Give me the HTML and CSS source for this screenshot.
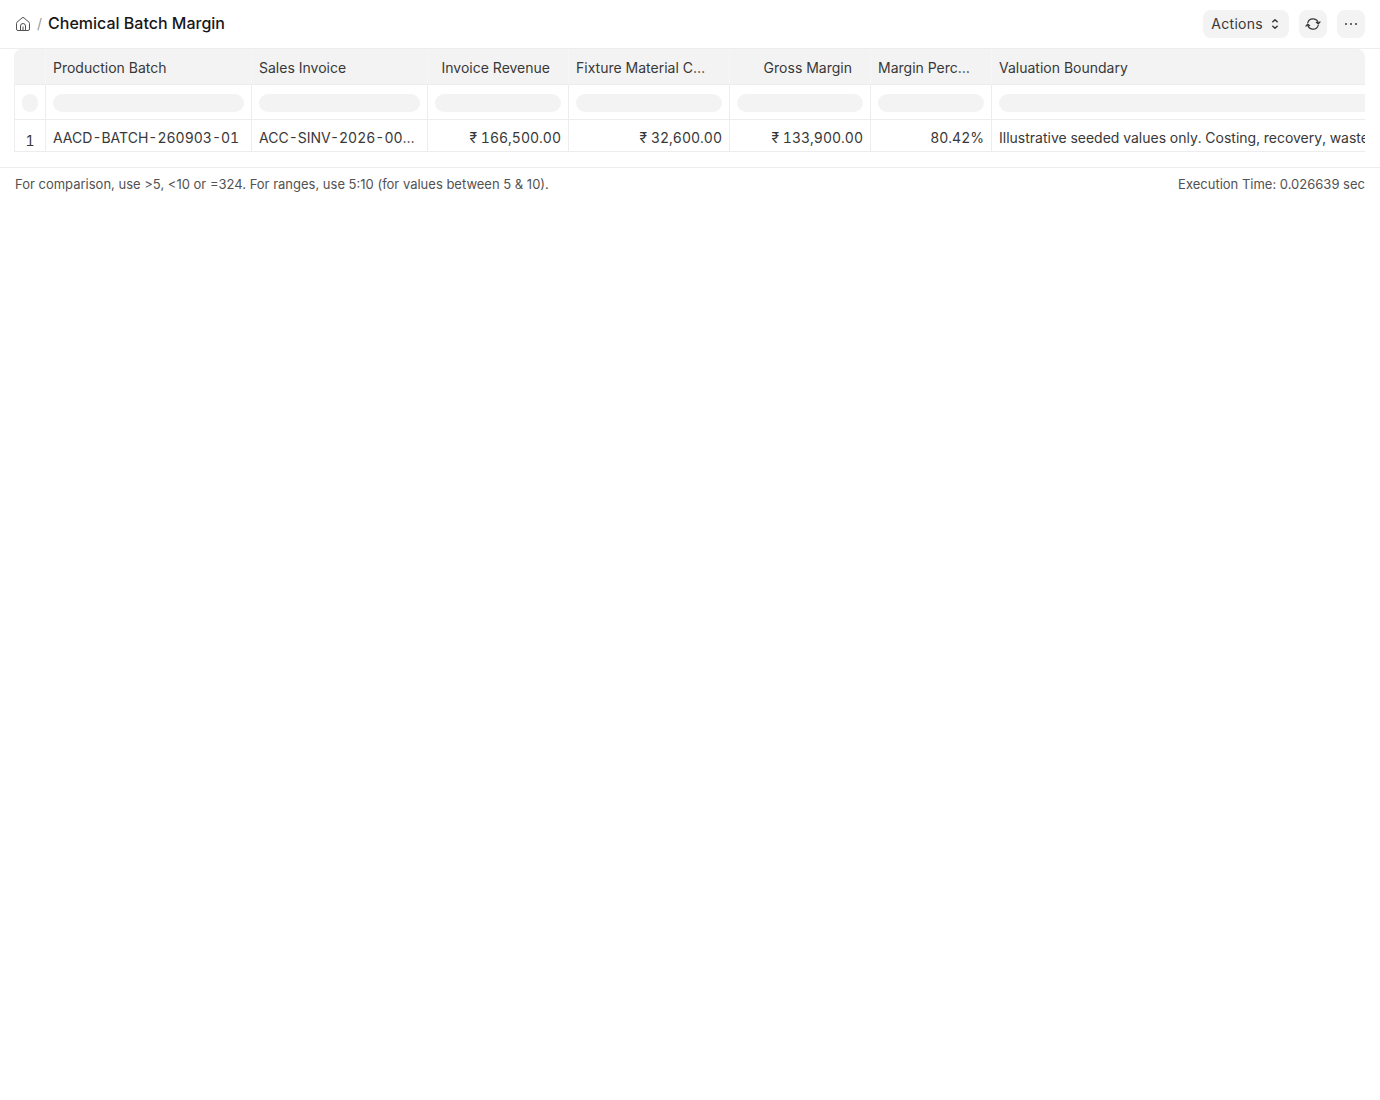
FILE: index.html
```
<!DOCTYPE html>
<html lang="en">
<head>
    <meta charset="UTF-8">
    <meta name="viewport" content="width=device-width, initial-scale=1.0">
    <title>Chemical Batch Margin</title>
    <link rel="stylesheet" href="styles.css">
</head>
<body>
    <header class="page-head">
        <nav class="breadcrumb" aria-label="Breadcrumb">
            <a href="#" class="home-link" aria-label="Home">
                <svg width="16" height="16" viewBox="0 0 16 16" fill="none" stroke="currentColor" stroke-linejoin="round">
                    <path d="M1.5 7.3a1.5 1.5 0 0 1 .5-1.1l5-4.3a1.5 1.5 0 0 1 2 0l5 4.3a1.5 1.5 0 0 1 .5 1.1V13a1.5 1.5 0 0 1-1.5 1.5H3A1.5 1.5 0 0 1 1.5 13z"/>
                    <path d="M5.5 14.5V10a2.5 2.5 0 0 1 5 0v4.5M8 10.5v4"/>
                </svg>
            </a>
            <span class="divider">/</span>
            <h1>Chemical Batch Margin</h1>
        </nav>
        <div class="page-actions">
            <button type="button" class="btn">
                Actions
                <svg width="8" height="12" viewBox="0 0 8 12" fill="none" stroke="currentColor" stroke-width="1.5" stroke-linecap="round" stroke-linejoin="round">
                    <path d="M1.8 3.8 4 1.8 6.2 3.8M1.8 8.2 4 10.2 6.2 8.2"/>
                </svg>
            </button>
            <button type="button" class="btn btn-icon" aria-label="Refresh">
                <svg width="16" height="16" viewBox="0 0 16 16" fill="none" stroke="currentColor" stroke-width="1.2" stroke-linecap="round" stroke-linejoin="round">
                    <path d="M2.8 6.6A5.4 5.4 0 0 1 13.3 7.6M11.3 6.3l2.1 1.6 1.6-2.1"/>
                    <path d="M13.2 9.4A5.4 5.4 0 0 1 2.7 8.4M1 10.2l1.6-2.1 2.1 1.6"/>
                </svg>
            </button>
            <button type="button" class="btn btn-icon" aria-label="Menu">
                <svg width="14" height="14" viewBox="0 0 14 14" fill="currentColor">
                    <circle cx="2" cy="7" r="1"/>
                    <circle cx="7" cy="7" r="1"/>
                    <circle cx="12" cy="7" r="1"/>
                </svg>
            </button>
        </div>
    </header>

    <main>
        <div class="report-wrapper">
            <table class="report">
                <colgroup>
                    <col class="col-index">
                    <col class="col-batch">
                    <col class="col-invoice">
                    <col class="col-amount">
                    <col class="col-cost">
                    <col class="col-amount">
                    <col class="col-percent">
                    <col class="col-note">
                </colgroup>
                <thead>
                    <tr class="titles">
                        <th></th>
                        <th>Production Batch</th>
                        <th>Sales Invoice</th>
                        <th class="number">Invoice Revenue</th>
                        <th>Fixture Material C…</th>
                        <th class="number">Gross Margin</th>
                        <th>Margin Perc…</th>
                        <th>Valuation Boundary</th>
                    </tr>
                    <tr class="filters">
                        <td><input type="text" aria-label="Filter row number"></td>
                        <td><input type="text" aria-label="Filter Production Batch"></td>
                        <td><input type="text" aria-label="Filter Sales Invoice"></td>
                        <td><input type="text" aria-label="Filter Invoice Revenue"></td>
                        <td><input type="text" aria-label="Filter Fixture Material"></td>
                        <td><input type="text" aria-label="Filter Gross Margin"></td>
                        <td><input type="text" aria-label="Filter Margin"></td>
                        <td><input type="text" aria-label="Filter Valuation Boundary"></td>
                    </tr>
                </thead>
                <tbody>
                    <tr>
                        <td class="row-index">1</td>
                        <td>AACD-BATCH-260903-01</td>
                        <td>ACC-SINV-2026-00…</td>
                        <td class="number">₹ 166,500.00</td>
                        <td class="number">₹ 32,600.00</td>
                        <td class="number">₹ 133,900.00</td>
                        <td class="number">80.42%</td>
                        <td>Illustrative seeded values only. Costing, recovery, waste</td>
                    </tr>
                </tbody>
            </table>
        </div>
        <div class="report-footer">
            <span>For comparison, use &gt;5, &lt;10 or =324. For ranges, use 5:10 (for values between 5 &amp; 10).</span>
            <span>Execution Time: 0.026639 sec</span>
        </div>
    </main>
</body>
</html>
```

FILE: styles.css
```
* {
    box-sizing: border-box;
}

body {
    margin: 0;
    background: #fff;
    color: #383838;
    font-family: Inter, "Noto Sans", sans-serif;
    font-size: 14px;
    line-height: 20px;
}

.page-head {
    display: flex;
    align-items: center;
    justify-content: space-between;
    height: 49px;
    padding: 0 15px;
    border-bottom: 1px solid #ededed;
}

.breadcrumb {
    display: flex;
    align-items: center;
}

.home-link {
    display: flex;
    color: #525252;
}

.divider {
    padding: 0 6px;
    color: #999;
}

.page-head h1 {
    margin: 0;
    padding-bottom: 2px;
    color: #171717;
    font-size: 16px;
    font-weight: 500;
}

.page-actions {
    display: flex;
    gap: 10px;
}

.btn {
    display: flex;
    align-items: center;
    gap: 8px;
    height: 28px;
    padding: 0 10px 0 8px;
    border: none;
    border-radius: 8px;
    background: #f3f3f3;
    color: #383838;
    font: inherit;
    letter-spacing: 0.02em;
    cursor: pointer;
}

.btn-icon {
    justify-content: center;
    width: 28px;
    padding: 0;
}

.report-wrapper {
    margin: 0 15px 15px 14px;
    overflow: hidden;
    border-radius: 8px 8px 0 0;
}

.report {
    width: 100%;
    min-width: 1600px;
    table-layout: fixed;
    border-collapse: separate;
    border-spacing: 0;
}

.col-index { width: 32px; }
.col-batch { width: 206px; }
.col-invoice { width: 176px; }
.col-amount { width: 141px; }
.col-cost { width: 161px; }
.col-percent { width: 121px; }

.report th,
.report td {
    padding: 0 7px;
    border-right: 1px solid #ededed;
    border-bottom: 1px solid #ededed;
    text-align: left;
    white-space: nowrap;
    overflow: hidden;
}

.report td:first-child {
    border-left: 1px solid #ededed;
}

.report .titles th {
    height: 36px;
    padding: 2px 18px 0 7px;
    border-right-color: #f6f6f6;
    background: #f3f3f3;
    font-weight: 400;
}

.report .filters td {
    height: 35px;
    padding-top: 2px;
}

.filters input {
    display: block;
    width: 100%;
    height: 18px;
    padding: 0 8px;
    border: none;
    border-radius: 9px;
    background: #f3f3f3;
    font: inherit;
}

.report tbody td {
    height: 32px;
    padding-top: 4px;
    font-variant-numeric: tabular-nums;
}

.report .number {
    text-align: right;
}

.report tbody .row-index {
    padding-top: 10px;
    text-align: center;
}

.report-footer {
    display: flex;
    justify-content: space-between;
    padding: 6px 15px;
    border-top: 1px solid #ededed;
    color: #525252;
    font-size: 13px;
}
```
